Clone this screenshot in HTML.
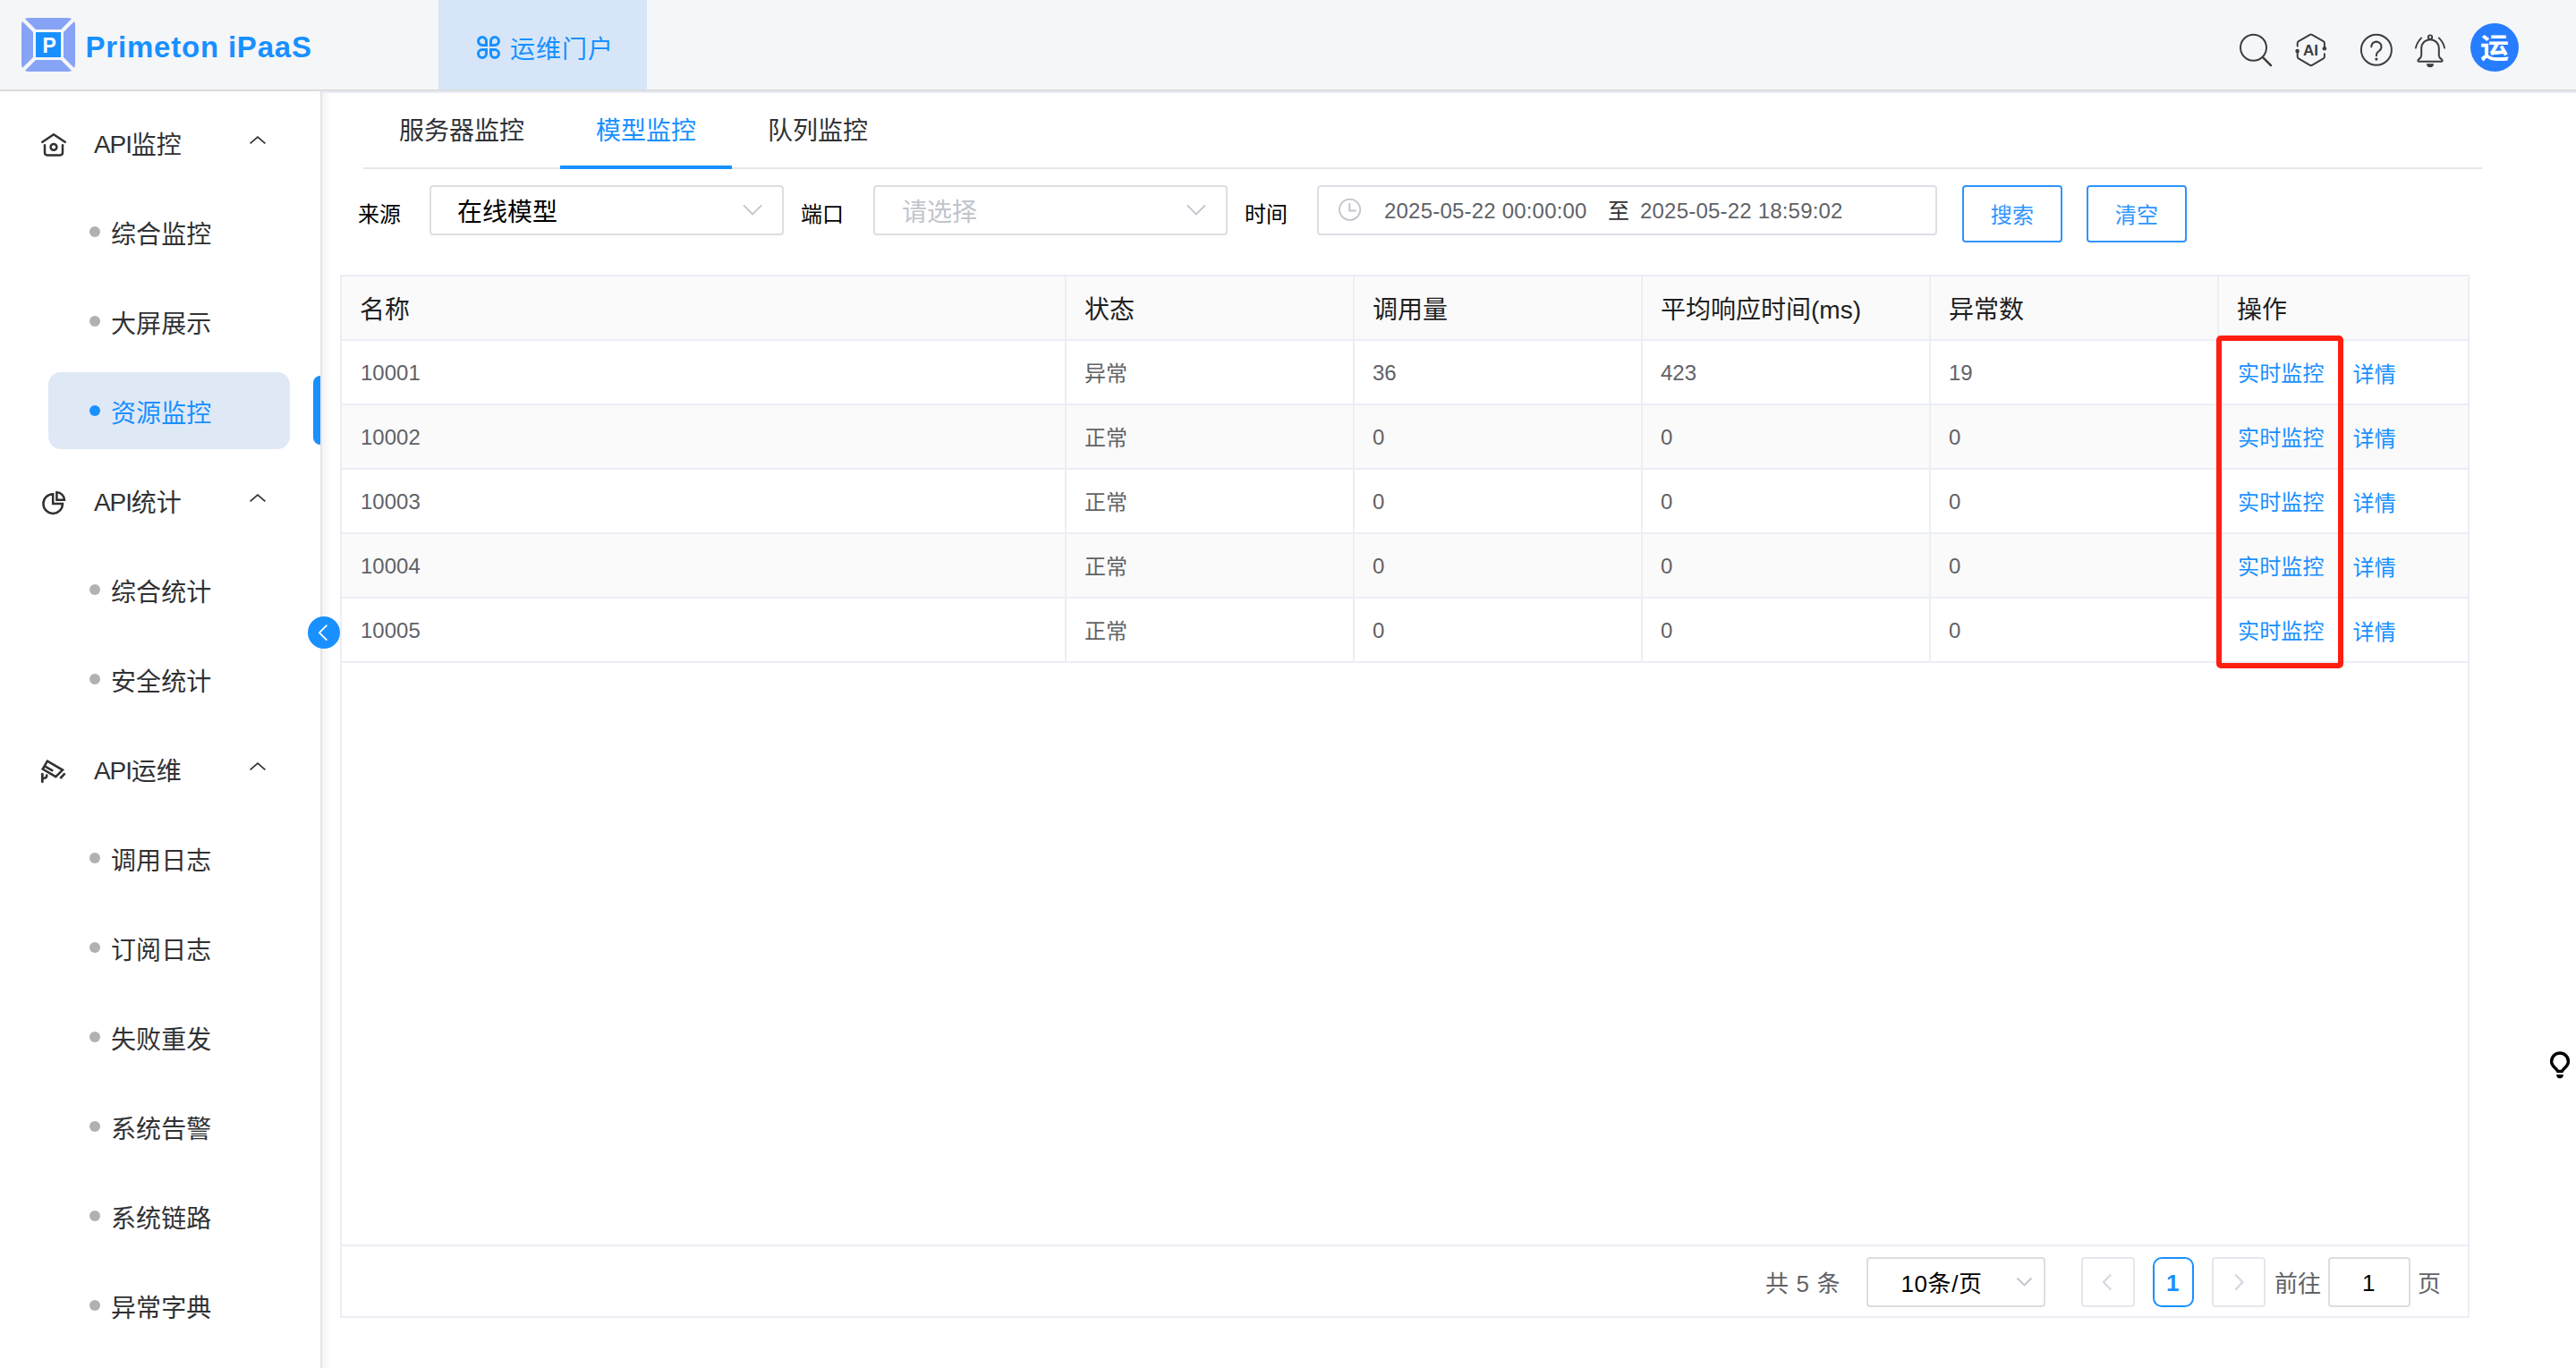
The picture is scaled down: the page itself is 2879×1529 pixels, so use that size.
<!DOCTYPE html>
<html lang="zh-CN">
<head>
<meta charset="utf-8">
<title>Primeton iPaaS - 运维门户</title>
<style>
*{box-sizing:border-box;margin:0;padding:0}
html,body{width:2879px;height:1529px;overflow:hidden;background:#fff}
body{font-family:"Liberation Sans","Noto Sans CJK SC",sans-serif;color:#303133;position:relative}
.abs{position:absolute}
.t{position:absolute;white-space:nowrap;line-height:1}
/* header */
#header{position:absolute;left:0;top:0;width:2879px;height:100px;background:#f5f6f8}
#hline{position:absolute;left:0;top:100px;width:2879px;height:2px;background:#dcdcdc}
#hline2{position:absolute;left:360px;top:102px;width:2519px;height:2px;background:#e9edf6}
#navtab{position:absolute;left:490px;top:0;width:233px;height:100px;background:#d6e6f8}
.blue{color:#1890ff !important}
/* sidebar */
#sidebar{position:absolute;left:0;top:102px;width:358px;height:1427px;background:#fff}
#sideline{position:absolute;left:358px;top:102px;width:2px;height:1427px;background:#e4e4e4}
#sideshadow{position:absolute;left:360px;top:104px;width:10px;height:1425px;background:linear-gradient(90deg,#f4f4f4,#fff)}
.grp{position:absolute;left:105px;font-size:28px;line-height:40px;color:#303133;white-space:nowrap}
.itm{position:absolute;left:124px;font-size:28px;line-height:40px;color:#303133;white-space:nowrap;letter-spacing:0.1px}
.dot{position:absolute;left:100px;width:12px;height:12px;border-radius:50%;background:#b1b1b1}
.arrow{position:absolute;left:278px;width:20px;height:12px}
#selbg{position:absolute;left:54px;top:416px;width:270px;height:86px;border-radius:14px;background:#dfe9f6}
#selbar{position:absolute;left:350px;top:420px;width:8px;height:77px;border-radius:8px 0 0 8px;background:#1890ff}
#collapse{position:absolute;left:344px;top:689px;width:36px;height:36px;border-radius:50%;background:#1890ff}
/* main */
.tab{position:absolute;top:127px;font-size:28px;line-height:40px;color:#303133;white-space:nowrap}
#tabline{position:absolute;left:406px;top:187px;width:2368px;height:2px;background:#e4e7ed}
#tabactive{position:absolute;left:626px;top:185px;width:192px;height:4px;background:#1890ff}
.lbl{position:absolute;font-size:24px;line-height:34px;color:#000;white-space:nowrap}
.inp{position:absolute;top:207px;height:56px;border:2px solid #dcdfe6;border-radius:4px;background:#fff}
.sel{border-color:#dcdede}
.lat{position:relative;top:-1.5px;letter-spacing:-1.1px}
.btn{position:absolute;top:207px;height:64px;width:112px;border:2px solid #3094ff;border-radius:4px;background:#fff;color:#3094ff;font-size:24px;line-height:60px;padding-top:2px;letter-spacing:0.2px;text-align:center}
/* table */
#tbl{position:absolute;left:380px;top:307px;width:2380px;height:1166px;border:2px solid #ebeef5}
.row{position:absolute;left:382px;width:2376px;height:72px;border-bottom:2px solid #ebeef5}
.vl{position:absolute;top:309px;width:2px;height:431px;background:#ebeef5}
.th{position:absolute;top:327px;font-size:28px;line-height:40px;color:#1f1f1f;white-space:nowrap}
.td{position:absolute;font-size:24px;line-height:34px;color:#606266;white-space:nowrap}
.lnk{position:absolute;font-size:24px;line-height:34px;color:#1890ff;white-space:nowrap;letter-spacing:0.15px}
#redbox{position:absolute;left:2477px;top:375px;width:142px;height:372px;border:6px solid #fe1f10;border-radius:5px}
/* pagination */
.pg{position:absolute;font-size:26px;line-height:36px;color:#606266;white-space:nowrap}
.pbox{position:absolute;top:1405px;height:56px;border:2px solid #e4e7ed;border-radius:4px;background:#fff}
</style>
</head>
<body>
<!-- HEADER -->
<div id="header">
  <svg class="abs" style="left:24px;top:20px" width="60" height="60" viewBox="0 0 60 60">
    <rect x="0" y="0" width="60" height="60" rx="8" fill="#87a3f6"/>
    <path d="M0 0L60 60M60 0L0 60" stroke="#f5f6f8" stroke-width="4.2"/>
    <rect x="13" y="13" width="34" height="34" fill="#f5f6f8"/>
    <rect x="16" y="16" width="28" height="28" fill="#1890ff"/>
  </svg>
  <div class="t" style="left:47.5px;top:39.5px;font-size:23px;font-weight:bold;color:#fff;line-height:23px">P</div>
  <div class="t blue" id="brand" style="left:95.5px;top:33px;font-size:33px;letter-spacing:0.8px;font-weight:bold;line-height:40px">Primeton iPaaS</div>
  <div id="navtab"></div>
  <svg class="abs" style="left:533px;top:40px" width="26" height="26" viewBox="0 0 26 26" fill="none" stroke="#1890ff" stroke-width="3">
    <path d="M10.5 10.5H6a4.5 4.5 0 1 1 4.5-4.5z"/>
    <path d="M15.5 10.5H20a4.5 4.5 0 1 0-4.5-4.5z"/>
    <path d="M10.5 15.5H6a4.5 4.5 0 1 0 4.5 4.5z"/>
    <path d="M15.5 15.5H20a4.5 4.5 0 1 1-4.5 4.5z"/>
  </svg>
  <div class="t blue" id="navtxt" style="left:570px;top:36px;letter-spacing:1px;font-size:28px;line-height:40px">运维门户</div>

  <!-- header right icons -->
  <svg class="abs" style="left:2496px;top:30px" width="330" height="56" viewBox="2496 30 330 56" fill="none" stroke="#3d3d3d" stroke-linecap="round" stroke-linejoin="round">
    <circle cx="2518.5" cy="53.3" r="14.5" stroke-width="2"/>
    <path d="M2529 64.2L2538 73.200" stroke-width="2.5"/>
    <path d="M2567.7 51.4V48.3a2.5 2.5 0 0 1 1.2-2.1L2581.6 38.9a2.5 2.5 0 0 1 2.4 0L2596.7 46.2a2.5 2.5 0 0 1 1.2 2.1V54" stroke-width="2"/>
    <path d="M2567.7 57.4V63.2a2.5 2.5 0 0 0 1.2 2.1L2581.6 72.8a2.5 2.5 0 0 0 2.4 0L2596.7 65.3a2.5 2.5 0 0 0 1.2-2.1V60.2" stroke-width="2"/>
    <circle cx="2567.6" cy="57.1" r="2.3" fill="#3d3d3d" stroke="none"/>
    <circle cx="2597.9" cy="54.2" r="2.3" fill="#3d3d3d" stroke="none"/>
    <circle cx="2655.9" cy="55.8" r="17" stroke-width="2"/>
    <path d="M2650.3 52.3a5.6 5.6 0 1 1 8.6 4.7c-2 1.4-3 2.6-3 4.6v0.6" stroke-width="2"/>
    <circle cx="2655.9" cy="66.1" r="1.6" fill="#3d3d3d" stroke="none"/>
    <circle cx="2716" cy="41.6" r="2.2" stroke-width="1.9"/>
    <path d="M2706.2 62V54a9.8 9.8 0 0 1 19.6 0V62c0 2 1.2 3 3 4.4c1.6 1.3 0.8 2.4-0.6 2.4H2703.8c-1.4 0-2.2-1.1-0.6-2.4c1.8-1.4 3-2.4 3-4.4z" stroke-width="2"/>
    <path d="M2712 71.3h8a4 4 0 0 1-8 0z" fill="#3d3d3d" stroke="none"/>
    <path d="M2706.2 42.4a22 22 0 0 0-6.3 11.2" stroke-width="1.9"/>
    <path d="M2725.8 42.4a22 22 0 0 1 6.3 11.2" stroke-width="1.9"/>
  </svg>
  <div class="t" style="left:2574px;top:47.5px;font-size:17px;line-height:17px;font-weight:bold;color:#3d3d3d">AI</div>
  <div class="abs" style="left:2761px;top:26px;width:54px;height:54px;border-radius:50%;background:#267dff"></div>
  <div class="t" id="avatar" style="left:2772px;top:34px;font-size:32px;line-height:40px;font-weight:bold;color:#fff">运</div>
</div>
<div id="hline"></div>
<div id="hline2"></div>

<!-- SIDEBAR -->
<div id="sidebar"></div>
<div id="sideline"></div>
<div id="sideshadow"></div>
<div id="selbg"></div>
<div id="selbar"></div>

<div class="grp" style="top:143px"><span class="lat">API</span>监控</div>
<div class="dot" style="top:253px"></div><div class="itm" style="top:243px">综合监控</div>
<div class="dot" style="top:353px"></div><div class="itm" style="top:343px">大屏展示</div>
<div class="dot" style="top:453px;background:#1890ff"></div><div class="itm blue" style="top:443px">资源监控</div>
<div class="grp" style="top:543px"><span class="lat">API</span>统计</div>
<div class="dot" style="top:653px"></div><div class="itm" style="top:643px">综合统计</div>
<div class="dot" style="top:753px"></div><div class="itm" style="top:743px">安全统计</div>
<div class="grp" style="top:843px"><span class="lat">API</span>运维</div>
<div class="dot" style="top:953px"></div><div class="itm" style="top:943px">调用日志</div>
<div class="dot" style="top:1053px"></div><div class="itm" style="top:1043px">订阅日志</div>
<div class="dot" style="top:1153px"></div><div class="itm" style="top:1143px">失败重发</div>
<div class="dot" style="top:1253px"></div><div class="itm" style="top:1243px">系统告警</div>
<div class="dot" style="top:1353px"></div><div class="itm" style="top:1343px">系统链路</div>
<div class="dot" style="top:1453px"></div><div class="itm" style="top:1443px">异常字典</div>


<!-- sidebar icons -->
<svg class="abs" style="left:40px;top:140px" width="40" height="740" viewBox="40 140 40 740" fill="none" stroke="#303133" stroke-width="2.5" stroke-linecap="round" stroke-linejoin="round">
  <path d="M47.3 158.8L60 150.3L72.7 158.8"/>
  <path d="M50 162.2V170.6a2.8 2.8 0 0 0 2.8 2.8H67.2a2.8 2.8 0 0 0 2.8-2.8V162.2"/>
  <circle cx="60" cy="164.4" r="3.4"/>
  <path d="M59.2 552.3A10.8 10.8 0 1 0 70 563.1H59.2z" stroke-linecap="butt" stroke-linejoin="miter"/>
  <path d="M63.4 550.3V558.8H72A8.6 8.6 0 0 0 63.4 550.3z" stroke-linecap="butt" stroke-linejoin="miter"/>
  <path d="M52.9 850.7L70 860.6L62.3 868.1L47.7 859.6z" stroke-linejoin="miter"/>
  <path d="M50 856.4L59.2 861.6" stroke-linecap="butt"/>
  <path d="M72.6 864.4L67.300 870" stroke-width="2.6" stroke-linecap="butt"/>
  <path d="M47.3 865.2V873.8" stroke-width="2.8"/>
  <path d="M47.3 870.2c3 0 5-1.2 5-3.6" stroke-width="2.6"/>
</svg>
<svg class="abs" style="left:276px;top:150px" width="24" height="720" viewBox="276 150 24 720" fill="none" stroke="#303133" stroke-width="1.7">
  <path d="M279.6 160.4L288 153.1L296.4 160.4"/>
  <path d="M279.6 560.4L288 553.1L296.4 560.4"/>
  <path d="M279.6 860.4L288 853.1L296.4 860.4"/>
</svg>
<div id="collapse"></div>
<svg class="abs" style="left:352px;top:695px" width="20" height="24" viewBox="352 695 20 24" fill="none" stroke="#fff" stroke-width="1.8"><path d="M365.400 698.700L356.900 707.200L365.400 715.700"/></svg>

<!-- MAIN: tabs -->
<div class="tab" style="left:446px">服务器监控</div>
<div class="tab blue" style="left:666px">模型监控</div>
<div class="tab" style="left:858px">队列监控</div>
<div id="tabline"></div>
<div id="tabactive"></div>

<!-- filters -->
<div class="lbl" style="left:400px;top:223px">来源</div>
<div class="inp sel" style="left:480px;width:396px"></div>
<div class="t" style="left:511px;top:218px;font-size:28px;line-height:40px;color:#000">在线模型</div>
<div class="lbl" style="left:895px;top:223px">端口</div>
<div class="inp sel" style="left:976px;width:396px"></div>
<div class="t" style="left:1008px;top:218px;font-size:28px;line-height:40px;color:#c0c4cc">请选择</div>
<div class="lbl" style="left:1391px;top:223px">时间</div>
<div class="inp" style="left:1472px;width:693px"></div>
<div class="t" style="left:1547px;top:218.5px;letter-spacing:0.2px;font-size:24px;line-height:34px;color:#606266">2025-05-22 00:00:00</div>
<div class="t" style="left:1797px;top:219px;font-size:24px;line-height:34px;color:#303133">至</div>
<div class="t" style="left:1833px;top:218.5px;letter-spacing:0.2px;font-size:24px;line-height:34px;color:#606266">2025-05-22 18:59:02</div>
<div class="btn" style="left:2193px">搜索</div>
<div class="btn" style="left:2332px">清空</div>


<svg class="abs" style="left:826px;top:224px" width="30" height="22" viewBox="826 224 30 22" fill="none" stroke="#c0c4cc" stroke-width="1.8"><path d="M831 229.4L841.1 239.4L851.2 229.4"/></svg>
<svg class="abs" style="left:1322px;top:224px" width="30" height="22" viewBox="1322 224 30 22" fill="none" stroke="#c0c4cc" stroke-width="1.8"><path d="M1326.8 229.4L1336.9 239.4L1347 229.4"/></svg>
<svg class="abs" style="left:1494px;top:220px" width="30" height="30" viewBox="1494 220 30 30" fill="none" stroke="#c0c4cc" stroke-width="1.8"><circle cx="1508.6" cy="234.3" r="11.6"/><path d="M1508.3 227.3V235.4H1515.6" stroke-width="2"/></svg>

<!-- table -->
<div id="tbl"></div>
<div class="row" style="top:309px;background:#fafafa"></div>
<div class="row" style="top:381px"></div>
<div class="row" style="top:453px;background:#fafafa"></div>
<div class="row" style="top:525px"></div>
<div class="row" style="top:597px;background:#fafafa"></div>
<div class="row" style="top:669px"></div>
<div class="vl" style="left:1190px"></div>
<div class="vl" style="left:1512px"></div>
<div class="vl" style="left:1834px"></div>
<div class="vl" style="left:2156px"></div>
<div class="vl" style="left:2478px"></div>

<div class="th" style="left:402px">名称</div>
<div class="th" style="left:1212px">状态</div>
<div class="th" style="left:1534px">调用量</div>
<div class="th" style="left:1856px">平均响应时间(ms)</div>
<div class="th" style="left:2178px">异常数</div>
<div class="th" style="left:2500px">操作</div>

<!-- rows -->
<div class="td" style="left:403px;top:399.5px">10001</div>
<div class="td" style="left:1212px;top:400.5px">异常</div>
<div class="td" style="left:1534px;top:399.5px">36</div>
<div class="td" style="left:1856px;top:399.5px">423</div>
<div class="td" style="left:2178px;top:399.5px">19</div>
<div class="lnk" style="left:2501px;top:400.5px">实时监控</div><div class="lnk" style="left:2629.5px;top:402px">详情</div>
<div class="td" style="left:403px;top:471.5px">10002</div>
<div class="td" style="left:1212px;top:472.5px">正常</div>
<div class="td" style="left:1534px;top:471.5px">0</div>
<div class="td" style="left:1856px;top:471.5px">0</div>
<div class="td" style="left:2178px;top:471.5px">0</div>
<div class="lnk" style="left:2501px;top:472.5px">实时监控</div><div class="lnk" style="left:2629.5px;top:474px">详情</div>
<div class="td" style="left:403px;top:543.5px">10003</div>
<div class="td" style="left:1212px;top:544.5px">正常</div>
<div class="td" style="left:1534px;top:543.5px">0</div>
<div class="td" style="left:1856px;top:543.5px">0</div>
<div class="td" style="left:2178px;top:543.5px">0</div>
<div class="lnk" style="left:2501px;top:544.5px">实时监控</div><div class="lnk" style="left:2629.5px;top:546px">详情</div>
<div class="td" style="left:403px;top:615.5px">10004</div>
<div class="td" style="left:1212px;top:616.5px">正常</div>
<div class="td" style="left:1534px;top:615.5px">0</div>
<div class="td" style="left:1856px;top:615.5px">0</div>
<div class="td" style="left:2178px;top:615.5px">0</div>
<div class="lnk" style="left:2501px;top:616.5px">实时监控</div><div class="lnk" style="left:2629.5px;top:618px">详情</div>
<div class="td" style="left:403px;top:687.5px">10005</div>
<div class="td" style="left:1212px;top:688.5px">正常</div>
<div class="td" style="left:1534px;top:687.5px">0</div>
<div class="td" style="left:1856px;top:687.5px">0</div>
<div class="td" style="left:2178px;top:687.5px">0</div>
<div class="lnk" style="left:2501px;top:688.5px">实时监控</div><div class="lnk" style="left:2629.5px;top:690px">详情</div>
<div id="redbox"></div>

<!-- pagination -->
<div class="abs" style="left:382px;top:1391px;width:2376px;height:2px;background:#ebeef5"></div>
<div class="pg" style="left:1973px;top:1417.4px;word-spacing:1.3px">共 5 条</div>
<div class="pbox" style="left:2086px;width:200px;border-color:#dcdede"></div>
<div class="pg" style="left:2124.5px;top:1417.4px;color:#000;letter-spacing:0.6px">10条/页</div>
<div class="pbox" style="left:2326px;width:60px"></div>
<div class="pbox" style="left:2406px;width:46px;border-color:#1890ff;border-radius:10px"></div>
<div class="pg" style="left:2421px;top:1415.6px;color:#1890ff;font-weight:bold">1</div>
<div class="pbox" style="left:2472px;width:60px"></div>
<div class="pg" style="left:2542px;top:1417.4px">前往</div>
<div class="pbox" style="left:2602px;width:92px;border-color:#dcdede"></div>
<div class="pg" style="left:2640px;top:1416px;color:#000">1</div>
<div class="pg" style="left:2702px;top:1417.4px">页</div>

<svg class="abs" style="left:2252px;top:1424px" width="24" height="20" viewBox="2252 1424 24 20" fill="none" stroke="#c0c4cc" stroke-width="1.8"><path d="M2254.5 1428.5L2262.5 1436.5L2270.5 1428.5"/></svg>
<svg class="abs" style="left:2344px;top:1420px" width="22" height="28" viewBox="2344 1420 22 28" fill="none" stroke="#d3d8e2" stroke-width="2.2"><path d="M2359.2 1424.4L2351 1433.1L2359.2 1441.8"/></svg>
<svg class="abs" style="left:2492px;top:1420px" width="22" height="28" viewBox="2492 1420 22 28" fill="none" stroke="#d3d8e2" stroke-width="2.2"><path d="M2498.2 1424.4L2506.4 1433.1L2498.2 1441.8"/></svg>
<svg class="abs" style="left:2846px;top:1172px" width="30" height="36" viewBox="2846 1172 30 36" fill="none" stroke="#000" stroke-width="3.4"><path d="M2858.5 1197.4c-0.6-3.2-6.9-5.4-6.9-11a9.4 9.4 0 0 1 18.8 0c0 5.600-6.300 7.800-6.900 11z" stroke-linejoin="round"/><path d="M2857.100 1201h7.800a3.900 4.200 0 0 1-7.800 0z" fill="#000" stroke="none"/></svg>
</body>
</html>
